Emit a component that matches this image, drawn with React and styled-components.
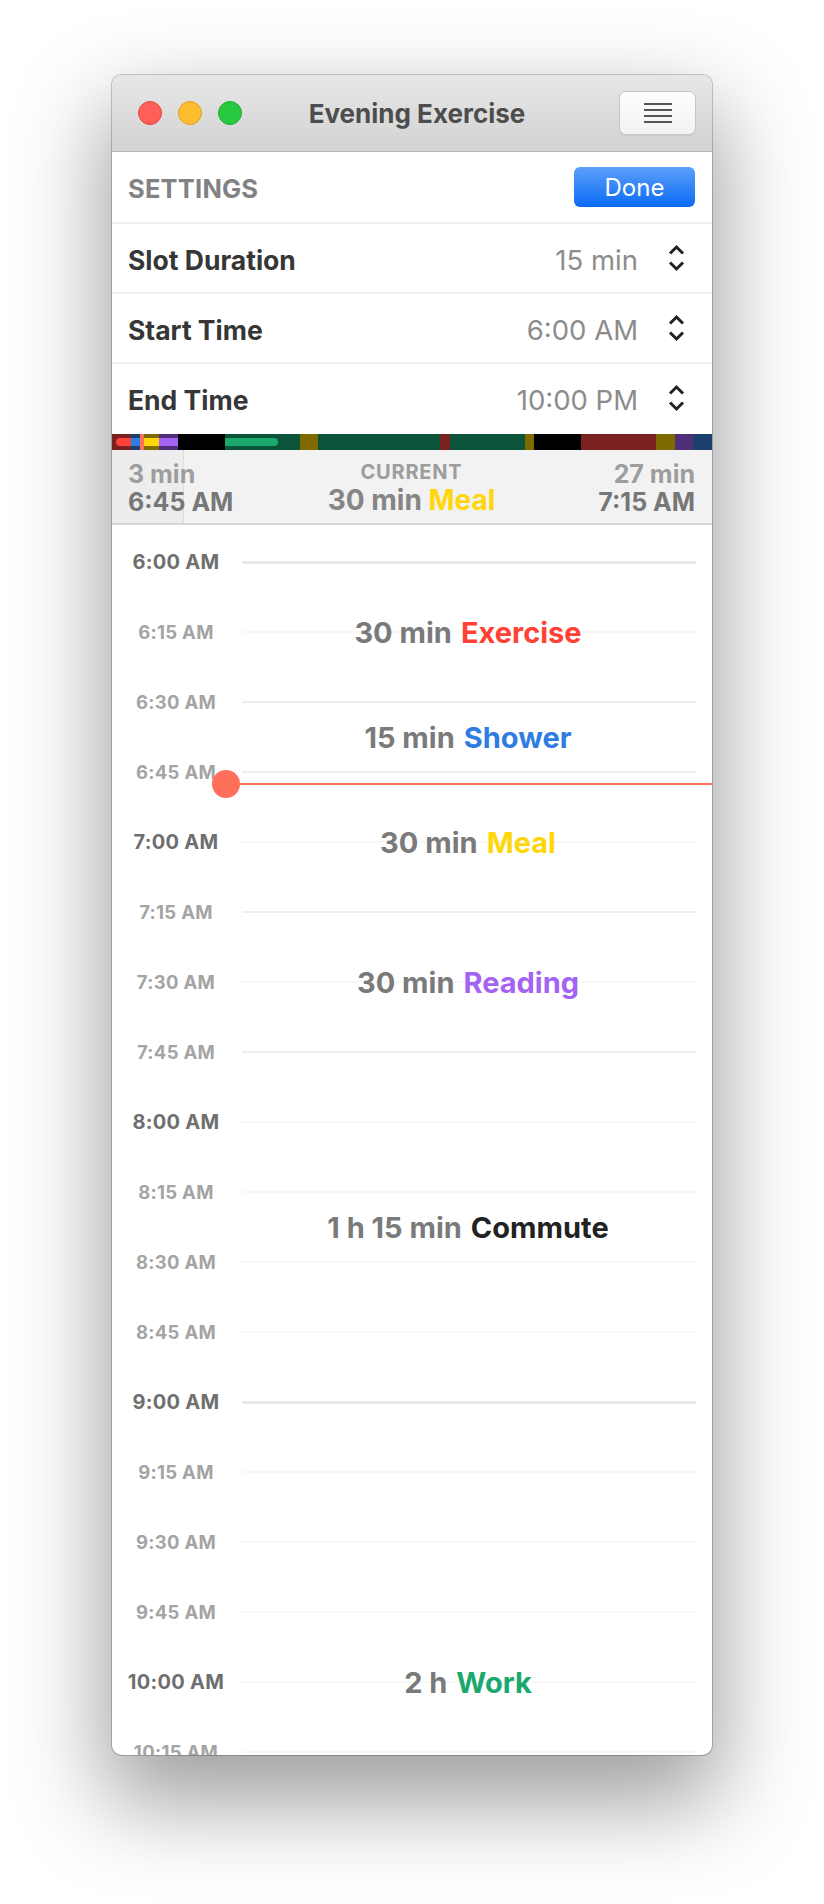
import React from "react";
import styled, { createGlobalStyle } from "styled-components";

const ACTIVITIES = {
	exercise: { name: "Exercise", bright: "#ff4136", dim: "#7b2120" },
	shower: { name: "Shower", bright: "#2f7de1", dim: "#1d3f6d" },
	meal: { name: "Meal", bright: "#ffd60a", dim: "#7f6a00" },
	reading: { name: "Reading", bright: "#a463f2", dim: "#4f2f7a" },
	commute: { name: "Commute", bright: "#222222", dim: "#000000", bar: "#000000" },
	work: { name: "Work", bright: "#1aa86f", dim: "#0c5439" },
};

// minutes from 6:00 AM, whole day ends at 10:00 PM (960 min)
const DAY = [
	["exercise", 0, 30],
	["shower", 30, 45],
	["meal", 45, 75],
	["reading", 75, 105],
	["commute", 105, 180],
	["work", 180, 300],
	["meal", 300, 330],
	["work", 330, 525],
	["exercise", 525, 540],
	["work", 540, 660],
	["meal", 660, 675],
	["commute", 675, 750],
	["exercise", 750, 870],
	["meal", 870, 900],
	["reading", 900, 930],
	["shower", 930, 960],
];
const DAY_LENGTH = 960;

const EVENTS = [
	{ key: "exercise", from: 0, to: 2, duration: "30 min" },
	{ key: "shower", from: 2, to: 3, duration: "15 min" },
	{ key: "meal", from: 3, to: 5, duration: "30 min" },
	{ key: "reading", from: 5, to: 7, duration: "30 min" },
	{ key: "commute", from: 7, to: 12, duration: "1 h 15 min" },
	{ key: "work", from: 12, to: 20, duration: "2 h" },
];

const BOUNDARIES = new Set([0, 2, 3, 5, 7, 12]);
const SLOT_COUNT = 18;
const SLOT = 70;
const NOW_MINUTES = 47.5;

const slotLabel = (i) => {
	const total = 6 * 60 + i * 15;
	const h = Math.floor(total / 60);
	const m = total % 60;
	return `${h}:${m.toString().padStart(2, "0")} AM`;
};

const GlobalStyle = createGlobalStyle`
	html, body {
		margin: 0;
		padding: 0;
		background: #ffffff;
	}
	body {
		font-family: Inter, "Noto Sans", sans-serif;
		-webkit-font-smoothing: antialiased;
	}
	* {
		box-sizing: border-box;
	}
`;

const Page = styled.div`
	width: 824px;
	height: 1904px;
	padding: 75px 0 0 112px;
	overflow: hidden;
`;

const Window = styled.div`
	width: 600px;
	height: 1680px;
	border-radius: 10px;
	overflow: hidden;
	background: #ffffff;
	display: flex;
	flex-direction: column;
	box-shadow: 0 0 0 1px rgba(0, 0, 0, 0.2), 0 40px 90px 8px rgba(0, 0, 0, 0.38);
`;

const TitleBar = styled.header`
	flex: none;
	height: 77px;
	display: grid;
	grid-template-columns: 1fr auto 1fr;
	align-items: center;
	padding: 0 16px 0 26px;
	background: linear-gradient(#e8e7e8, #d3d3d3);
	border-bottom: 1px solid #b6b6b6;
`;

const Lights = styled.div`
	display: flex;
	gap: 16px;
`;

const Light = styled.span`
	width: 24px;
	height: 24px;
	border-radius: 50%;
	background: ${(p) => p.$fill};
	border: 1px solid ${(p) => p.$edge};
`;

const Title = styled.h1`
	margin: 0;
	font-size: 26px;
	font-weight: 700;
	color: #4d4d4d;
`;

const MenuButton = styled.button`
	justify-self: end;
	width: 77px;
	height: 44px;
	border-radius: 7px;
	border: 1px solid #c6c6c6;
	background: linear-gradient(#fefefe, #f2f2f2);
	box-shadow: 0 1px 1px rgba(0, 0, 0, 0.06);
	display: flex;
	flex-direction: column;
	align-items: center;
	justify-content: center;
	gap: 4px;
	padding: 0;
`;

const MenuLine = styled.span`
	width: 28px;
	height: 2px;
	background: #555555;
`;

const SettingsHeader = styled.div`
	flex: none;
	height: 70px;
	display: flex;
	align-items: center;
	justify-content: space-between;
	padding: 0 17px 0 16px;
`;

const SectionTitle = styled.span`
	font-size: 25.5px;
	font-weight: 700;
	color: #828282;
	letter-spacing: 0.2px;
	padding-top: 2px;
`;

const DoneButton = styled.button`
	width: 121px;
	height: 40px;
	border: none;
	border-radius: 6px;
	background: linear-gradient(#5d9ffa, #0a6bf5);
	color: #ffffff;
	font-family: inherit;
	font-size: 24px;
	font-weight: 400;
	padding: 0;
`;

const SettingRow = styled.div`
	flex: none;
	height: 70px;
	border-top: 2px solid #f1f1f1;
	display: flex;
	align-items: center;
	padding: 3px 27px 0 16px;
`;

const RowLabel = styled.span`
	flex: 1;
	font-size: 26.5px;
	font-weight: 700;
	color: #363636;
`;

const RowValue = styled.span`
	font-size: 27.5px;
	font-weight: 400;
	color: #8c8c8c;
	margin-right: 30px;
`;

const StepperIcon = styled.svg`
	flex: none;
	margin-top: -3px;
`;

const Stepper = () => (
	<StepperIcon width="17" height="28" viewBox="0 0 17 28">
		<polyline points="2,9.5 8.5,3 15,9.5" fill="none" stroke="#222" strokeWidth="3" />
		<polyline points="2,18.5 8.5,25 15,18.5" fill="none" stroke="#222" strokeWidth="3" />
	</StepperIcon>
);

const ColorBar = styled.div`
	flex: none;
	position: relative;
	height: 16px;
	margin-top: 2px;
	display: flex;
`;

const Segment = styled.span`
	flex: none;
	height: 100%;
	background: ${(p) => p.$color};
`;

const Viewport = styled.div`
	position: absolute;
	left: 4px;
	top: 4px;
	width: 162px;
	height: 8px;
	border-radius: 4px;
	overflow: hidden;
`;

const ViewportTrack = styled.div`
	display: flex;
	width: 600px;
	height: 100%;
	margin-left: -4px;
`;

const BarMarker = styled.span`
	position: absolute;
	top: 0;
	bottom: 0;
	width: 4px;
	background: #ff6f5a;
`;

const Info = styled.div`
	flex: none;
	position: relative;
	height: 75px;
	background: #f2f2f2;
	border-bottom: 2px solid #d6d6d6;
	display: grid;
	grid-template-columns: 1fr auto 1fr;
	align-items: center;
	padding: 2px 17px 0 16px;
`;

const Progress = styled.div`
	position: absolute;
	left: 0;
	top: 0;
	bottom: 0;
	background: #ededed;
	border-right: 1px solid #dedede;
`;

const InfoSide = styled.div`
	position: relative;
	display: flex;
	flex-direction: column;
	align-items: ${(p) => (p.$right ? "flex-end" : "flex-start")};
	font-size: 25px;
	font-weight: 700;
	line-height: 28px;
`;

const Faded = styled.span`
	color: #9d9d9d;
`;

const Clock = styled.span`
	color: #777777;
`;

const InfoCenter = styled.div`
	position: relative;
	display: flex;
	flex-direction: column;
	align-items: center;
`;

const Caption = styled.span`
	font-size: 20px;
	font-weight: 700;
	line-height: 24px;
	letter-spacing: 0.8px;
	color: #9d9d9d;
`;

const CurrentText = styled.span`
	font-size: 28px;
	font-weight: 700;
	line-height: 32px;
	color: #858585;
`;

const Name = styled.span`
	color: ${(p) => p.$color};
`;

const Timeline = styled.div`
	flex: 1;
	position: relative;
	overflow: hidden;
	padding-top: 2px;
	display: grid;
	grid-template-columns: 128px 1fr;
	grid-auto-rows: 35px;
`;

const SlotLabel = styled.span`
	grid-column: 1;
	display: flex;
	align-items: center;
	justify-content: center;
	font-weight: 700;
	letter-spacing: 0.3px;
	font-size: ${(p) => (p.$hour ? "20px" : "18.5px")};
	color: ${(p) => (p.$hour ? "#6f6f6f" : "#a4a4a4")};
`;

const SlotLine = styled.span`
	grid-column: 2;
	align-self: center;
	margin: 0 16px 0 2px;
	height: ${(p) => (p.$weight === "strong" ? "3px" : "2px")};
	background: ${(p) =>
		p.$weight === "strong" ? "#e9e9e9" : p.$weight === "medium" ? "#eeeeee" : "#f8f8f8"};
`;

const EventLabel = styled.div`
	grid-column: 2;
	display: flex;
	align-items: center;
	justify-content: center;
	gap: 9px;
	margin-right: 16px;
	font-size: 29px;
	font-weight: 700;
	color: #7a7a7a;
	z-index: 1;
`;

const NowIndicator = styled.div`
	position: absolute;
	left: 100px;
	right: 0;
	height: 28px;
	display: flex;
	align-items: center;
	z-index: 2;
`;

const NowDot = styled.span`
	flex: none;
	width: 28px;
	height: 28px;
	border-radius: 50%;
	background: #ff6f5a;
`;

const NowLine = styled.span`
	flex: 1;
	height: 2px;
	background: #ff6f5a;
`;

const segmentWidth = (from, to) => `${((to - from) / DAY_LENGTH) * 100}%`;

const App = () => {
	const nowTop = 2 + SLOT / 2 + (NOW_MINUTES / 15) * SLOT - 14;

	return (
		<>
			<GlobalStyle />
			<Page>
				<Window>
					<TitleBar>
						<Lights>
							<Light $fill="#ff5f57" $edge="#e2463f" />
							<Light $fill="#febc2e" $edge="#df9f24" />
							<Light $fill="#28c840" $edge="#1dac2c" />
						</Lights>
						<Title>Evening Exercise</Title>
						<MenuButton aria-label="menu">
							<MenuLine />
							<MenuLine />
							<MenuLine />
							<MenuLine />
						</MenuButton>
					</TitleBar>

					<SettingsHeader>
						<SectionTitle>SETTINGS</SectionTitle>
						<DoneButton>Done</DoneButton>
					</SettingsHeader>
					<SettingRow>
						<RowLabel>Slot Duration</RowLabel>
						<RowValue>15 min</RowValue>
						<Stepper />
					</SettingRow>
					<SettingRow>
						<RowLabel>Start Time</RowLabel>
						<RowValue>6:00 AM</RowValue>
						<Stepper />
					</SettingRow>
					<SettingRow>
						<RowLabel>End Time</RowLabel>
						<RowValue>10:00 PM</RowValue>
						<Stepper />
					</SettingRow>

					<ColorBar>
						{DAY.map(([key, from, to]) => (
							<Segment
								key={`d${from}`}
								$color={ACTIVITIES[key].dim}
								style={{ width: segmentWidth(from, to) }}
							/>
						))}
						<Viewport>
							<ViewportTrack>
								{DAY.map(([key, from, to]) => (
									<Segment
										key={`b${from}`}
										$color={ACTIVITIES[key].bar || ACTIVITIES[key].bright}
										style={{ width: segmentWidth(from, to) }}
									/>
								))}
							</ViewportTrack>
						</Viewport>
						<BarMarker style={{ left: `${(NOW_MINUTES / DAY_LENGTH) * 600 - 2}px` }} />
					</ColorBar>

					<Info>
						<Progress style={{ width: "72px" }} />
						<InfoSide>
							<Faded>3 min</Faded>
							<Clock>6:45 AM</Clock>
						</InfoSide>
						<InfoCenter>
							<Caption>CURRENT</Caption>
							<CurrentText>
								30 min <Name $color="#ffd60a">Meal</Name>
							</CurrentText>
						</InfoCenter>
						<InfoSide $right>
							<Faded>27 min</Faded>
							<Clock>7:15 AM</Clock>
						</InfoSide>
					</Info>

					<Timeline>
						{Array.from({ length: SLOT_COUNT }, (_, i) => {
							const hour = i % 4 === 0;
							const weight = BOUNDARIES.has(i)
								? hour
									? "strong"
									: "medium"
								: "faint";
							const row = `${2 * i + 1} / span 2`;
							return (
								<React.Fragment key={i}>
									<SlotLabel $hour={hour} style={{ gridRow: row }}>
										{slotLabel(i)}
									</SlotLabel>
									<SlotLine $weight={weight} style={{ gridRow: row }} />
								</React.Fragment>
							);
						})}
						{EVENTS.map(({ key, from, to, duration }) => (
							<EventLabel
								key={key}
								style={{ gridRow: `${2 * from + 2} / ${2 * to + 2}` }}
							>
								<span>{duration}</span>
								<Name $color={ACTIVITIES[key].bright}>
									{ACTIVITIES[key].name}
								</Name>
							</EventLabel>
						))}
						<NowIndicator style={{ top: `${nowTop}px` }}>
							<NowDot />
							<NowLine />
						</NowIndicator>
					</Timeline>
				</Window>
			</Page>
		</>
	);
};

export default App;
